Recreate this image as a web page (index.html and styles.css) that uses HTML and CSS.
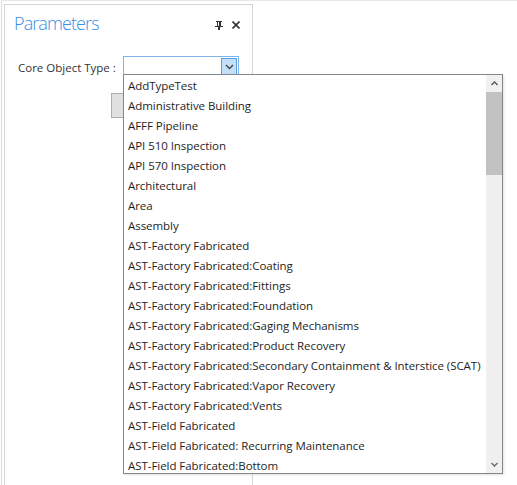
FILE: index.html
```html
<!DOCTYPE html>
<html>
<head>
<meta charset="utf-8">
<link rel="stylesheet" href="styles.css">
</head>
<body>
<div class="window">
  <div class="panel">
    <div class="panel-head">
      <h1 class="title">Parameters</h1>
      <div class="head-icons">
        <svg class="pin" width="8" height="9" viewBox="0 0 8 9"><rect x="1" y="0" width="6" height="1" fill="#333"/><rect x="2" y="1" width="1" height="4" fill="#333"/><rect x="4" y="1" width="2" height="4" fill="#333"/><rect x="0" y="5" width="8" height="1" fill="#333"/><rect x="3" y="6" width="2" height="3" fill="#333"/></svg>
        <svg class="close" width="8" height="8" viewBox="0 0 8 8"><path d="M0.5 0.5 L7.5 7.5 M7.5 0.5 L0.5 7.5" stroke="#333" stroke-width="1.6"/></svg>
      </div>
    </div>
    <div class="field">
      <span class="label">Core Object Type :</span>
      <div class="combo">
        <div class="combo-btn">
          <svg width="9" height="6" viewBox="0 0 9 6"><path d="M1 1 L4.5 4.5 L8 1" stroke="#444" stroke-width="1.4" fill="none"/></svg>
        </div>
      </div>
    </div>
    <div class="btn-row"><div class="btn"></div></div>
  </div>
  <div class="popup">
    <ul class="list">
      <li>AddTypeTest</li>
      <li>Administrative Building</li>
      <li>AFFF Pipeline</li>
      <li>API 510 Inspection</li>
      <li>API 570 Inspection</li>
      <li>Architectural</li>
      <li>Area</li>
      <li>Assembly</li>
      <li>AST-Factory Fabricated</li>
      <li>AST-Factory Fabricated:Coating</li>
      <li>AST-Factory Fabricated:Fittings</li>
      <li>AST-Factory Fabricated:Foundation</li>
      <li>AST-Factory Fabricated:Gaging Mechanisms</li>
      <li>AST-Factory Fabricated:Product Recovery</li>
      <li>AST-Factory Fabricated:Secondary Containment &amp; Interstice (SCAT)</li>
      <li>AST-Factory Fabricated:Vapor Recovery</li>
      <li>AST-Factory Fabricated:Vents</li>
      <li>AST-Field Fabricated</li>
      <li>AST-Field Fabricated: Recurring Maintenance</li>
      <li>AST-Field Fabricated:Bottom</li>
    </ul>
    <div class="scrollbar">
      <div class="sb-arrow">
        <svg width="7" height="5" viewBox="0 0 7 5"><path d="M0.5 4 L3.5 1 L6.5 4" stroke="#555" stroke-width="1.3" fill="none"/></svg>
      </div>
      <div class="sb-thumb"></div>
      <div class="sb-track"></div>
      <div class="sb-arrow">
        <svg width="7" height="5" viewBox="0 0 7 5"><path d="M0.5 1 L3.5 4 L6.5 1" stroke="#666" stroke-width="1.3" fill="none"/></svg>
      </div>
    </div>
  </div>
</div>
</body>
</html>
```
FILE: styles.css
```css
html, body {
  margin: 0;
  padding: 0;
  background: #fff;
  font-family: "Open Sans", "Noto Sans", sans-serif;
}
.window {
  position: relative;
  height: 485px;
  margin-left: 1px;
  border-left: 1px solid #dcdcdc;
  border-top: 1px solid #e8e8e8;
  padding: 3px 0 0 2px;
  box-sizing: border-box;
}
.panel {
  width: 249px;
  height: 481px;
  box-sizing: border-box;
  border: 1px solid #d6d6d6;
  border-bottom: none;
}
.panel-head {
  display: flex;
  justify-content: space-between;
  align-items: center;
  padding: 4px 12px 0 9px;
  height: 28px;
}
.title {
  margin: 0;
  font-weight: 300;
  font-size: 18px;
  color: #3a8ee6;
  letter-spacing: -0.9px;
}
.head-icons {
  display: flex;
  gap: 9px;
  align-items: center;
  margin-top: 4px;
}
.field {
  display: flex;
  align-items: center;
  margin-top: 19px;
  padding-left: 13px;
}
.label {
  font-size: 11.5px;
  color: #333;
  width: 105px;
}
.combo {
  width: 116px;
  height: 22px;
  box-sizing: border-box;
  border: 1px solid #7eb4ea;
  display: flex;
  justify-content: flex-end;
  padding: 1px;
}
.combo-btn {
  width: 16px;
  height: 18px;
  box-sizing: border-box;
  background: #c4dff8;
  border: 1px solid #5a9fe4;
  display: flex;
  align-items: center;
  justify-content: center;
}
.btn-row {
  padding-left: 106px;
  margin-top: 15px;
}
.btn {
  width: 80px;
  height: 25px;
  box-sizing: border-box;
  background: #e1e1e1;
  border: 1px solid #adadad;
}
.popup {
  position: absolute;
  left: 121px;
  top: 73px;
  width: 380px;
  height: 400px;
  box-sizing: border-box;
  border: 1px solid #828790;
  background: #fff;
  display: flex;
  box-shadow: 1px 1px 2px rgba(0,0,0,0.12);
}
.list {
  list-style: none;
  margin: 0;
  padding: 1px 0 0 4px;
  flex: 1;
  overflow: hidden;
}
.list li {
  height: 20px;
  line-height: 20px;
  font-size: 11.5px;
  letter-spacing: -0.05px;
  color: #1e1e1e;
  white-space: nowrap;
}
.scrollbar {
  width: 16px;
  background: #f0f0f0;
  display: flex;
  flex-direction: column;
}
.sb-arrow {
  height: 17px;
  display: flex;
  align-items: center;
  justify-content: center;
}
.sb-thumb {
  height: 83px;
  background: #c2c2c2;
}
.sb-track {
  flex: 1;
}
```
